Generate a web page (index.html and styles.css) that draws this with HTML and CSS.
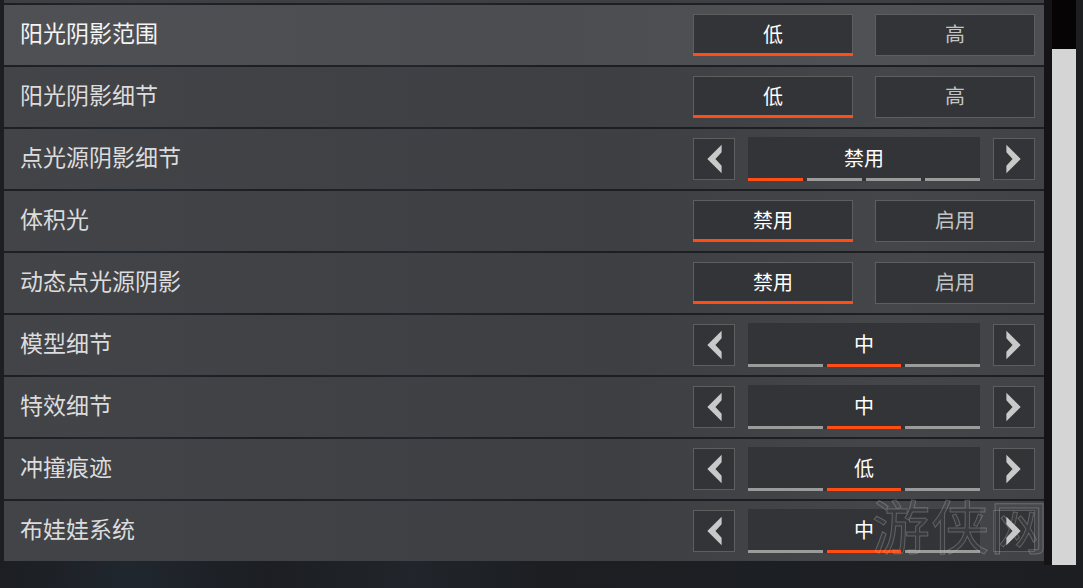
FILE: index.html
```html
<!DOCTYPE html>
<html lang="zh-CN">
<head>
<meta charset="utf-8">
<title>图形设置</title>
<link rel="stylesheet" href="styles.css">
</head>
<body>
<div class="screen">
  <div class="list">
    <div class="row-cut"></div>

    <div class="row active">
      <span class="label">阳光阴影范围</span>
      <div class="toggle">
        <div class="opt on">低</div>
        <div class="opt">高</div>
      </div>
    </div>

    <div class="row">
      <span class="label">阳光阴影细节</span>
      <div class="toggle">
        <div class="opt on">低</div>
        <div class="opt">高</div>
      </div>
    </div>

    <div class="row">
      <span class="label">点光源阴影细节</span>
      <div class="selector">
        <div class="arrow"><svg viewBox="0 0 42 42" width="40" height="40"><polygon points="29,6 29,14 22.5,21 29,28 29,36 14,21" /></svg></div>
        <div class="bar">
          <div class="value">禁用</div>
          <div class="segs"><i class="seg on"></i><i class="seg"></i><i class="seg"></i><i class="seg"></i></div>
        </div>
        <div class="arrow"><svg viewBox="0 0 42 42" width="40" height="40"><polygon points="13,6 13,14 19.5,21 13,28 13,36 28,21" /></svg></div>
      </div>
    </div>

    <div class="row">
      <span class="label">体积光</span>
      <div class="toggle">
        <div class="opt on">禁用</div>
        <div class="opt">启用</div>
      </div>
    </div>

    <div class="row">
      <span class="label">动态点光源阴影</span>
      <div class="toggle">
        <div class="opt on">禁用</div>
        <div class="opt">启用</div>
      </div>
    </div>

    <div class="row">
      <span class="label">模型细节</span>
      <div class="selector">
        <div class="arrow"><svg viewBox="0 0 42 42" width="40" height="40"><polygon points="29,6 29,14 22.5,21 29,28 29,36 14,21" /></svg></div>
        <div class="bar">
          <div class="value">中</div>
          <div class="segs"><i class="seg"></i><i class="seg on"></i><i class="seg"></i></div>
        </div>
        <div class="arrow"><svg viewBox="0 0 42 42" width="40" height="40"><polygon points="13,6 13,14 19.5,21 13,28 13,36 28,21" /></svg></div>
      </div>
    </div>

    <div class="row">
      <span class="label">特效细节</span>
      <div class="selector">
        <div class="arrow"><svg viewBox="0 0 42 42" width="40" height="40"><polygon points="29,6 29,14 22.5,21 29,28 29,36 14,21" /></svg></div>
        <div class="bar">
          <div class="value">中</div>
          <div class="segs"><i class="seg"></i><i class="seg on"></i><i class="seg"></i></div>
        </div>
        <div class="arrow"><svg viewBox="0 0 42 42" width="40" height="40"><polygon points="13,6 13,14 19.5,21 13,28 13,36 28,21" /></svg></div>
      </div>
    </div>

    <div class="row">
      <span class="label">冲撞痕迹</span>
      <div class="selector">
        <div class="arrow"><svg viewBox="0 0 42 42" width="40" height="40"><polygon points="29,6 29,14 22.5,21 29,28 29,36 14,21" /></svg></div>
        <div class="bar">
          <div class="value">低</div>
          <div class="segs"><i class="seg"></i><i class="seg on"></i><i class="seg"></i></div>
        </div>
        <div class="arrow"><svg viewBox="0 0 42 42" width="40" height="40"><polygon points="13,6 13,14 19.5,21 13,28 13,36 28,21" /></svg></div>
      </div>
    </div>

    <div class="row">
      <span class="label">布娃娃系统</span>
      <div class="selector">
        <div class="arrow"><svg viewBox="0 0 42 42" width="40" height="40"><polygon points="29,6 29,14 22.5,21 29,28 29,36 14,21" /></svg></div>
        <div class="bar">
          <div class="value">中</div>
          <div class="segs"><i class="seg"></i><i class="seg on"></i><i class="seg"></i></div>
        </div>
        <div class="arrow"><svg viewBox="0 0 42 42" width="40" height="40"><polygon points="13,6 13,14 19.5,21 13,28 13,36 28,21" /></svg></div>
      </div>
    </div>
  </div>

  <div class="scrollbar">
    <div class="gutter"></div>
    <div class="track"><div class="thumb"></div></div>
  </div>
</div>
<div class="watermark">游侠网</div>
</body>
</html>
```

FILE: styles.css
```css
html, body {
  margin: 0;
  padding: 0;
}

body {
  width: 1083px;
  height: 588px;
  overflow: hidden;
  position: relative;
  font-family: "Noto Sans CJK SC", "Noto Sans", sans-serif;
  background:
    linear-gradient(90deg, rgba(40,55,70,0) 0%, rgba(40,55,70,0.35) 12%, rgba(40,55,70,0) 25%, rgba(45,55,65,0.3) 38%, rgba(45,55,65,0) 50%, rgba(30,35,40,0.2) 70%, rgba(0,0,0,0) 100%),
    #1c1e22;
}

.screen {
  display: flex;
  height: 588px;
}

.list {
  margin-left: 4px;
  width: 1040px;
  display: flex;
  flex-direction: column;
  gap: 2px;
}

.row-cut {
  height: 3px;
  background: #3e3f43;
}

.row {
  height: 60px;
  display: flex;
  align-items: center;
  padding: 0 9px 0 16px;
  box-sizing: border-box;
  background: linear-gradient(90deg, #434448 0%, #3f4044 45%, #3e3f43 60%, #45464a 85%, #424347 100%);
}

.row.active {
  background: linear-gradient(90deg, #4f5054 0%, #4c4d51 50%, #505155 85%, #4d4e52 100%);
}

.label {
  font-size: 23px;
  color: #dcdcdc;
  line-height: 30px;
  padding-bottom: 6px;
}

.row.active .label {
  color: #f4f4f4;
}

.toggle {
  margin-left: auto;
  display: flex;
  gap: 22px;
}

.opt {
  position: relative;
  width: 160px;
  height: 42px;
  box-sizing: border-box;
  border: 1px solid #5b605e;
  background: #333437;
  color: #c4c4c4;
  font-size: 20px;
  display: flex;
  align-items: center;
  justify-content: center;
  padding-bottom: 3px;
}

.opt.on {
  color: #ffffff;
}

.opt.on::after {
  content: "";
  position: absolute;
  left: -1px;
  right: -1px;
  bottom: -1px;
  height: 3px;
  background: #ff4d15;
}

.selector {
  margin-left: auto;
  display: flex;
  align-items: center;
  gap: 13px;
}

.arrow {
  width: 42px;
  height: 42px;
  box-sizing: border-box;
  border: 1px solid #5b605e;
  background: #333437;
  display: flex;
  align-items: center;
  justify-content: center;
}

.arrow svg {
  display: block;
  fill: #c9c9c9;
}

.bar {
  width: 232px;
  height: 44px;
  background: #333437;
  display: flex;
  flex-direction: column;
}

.value {
  flex: 1;
  display: flex;
  align-items: center;
  justify-content: center;
  color: #ffffff;
  font-size: 20px;
  padding-bottom: 1px;
}

.segs {
  display: flex;
  gap: 4px;
  height: 3px;
}

.seg {
  flex: 1;
  background: #9b9b9b;
}

.seg.on {
  background: #ff4d15;
}

.scrollbar {
  width: 32px;
  display: flex;
}

.gutter {
  width: 8px;
  background: #151316;
  height: 565px;
}

.track {
  width: 24px;
  height: 565px;
  background: #070405;
  display: flex;
  flex-direction: column;
  justify-content: flex-end;
}

.thumb {
  height: 516px;
  background: #d5d5d5;
}

.watermark {
  position: absolute;
  left: 872px;
  top: 474px;
  font-family: "Noto Sans CJK SC", sans-serif;
  font-size: 58px;
  line-height: 100px;
  letter-spacing: 1px;
  color: rgba(255, 255, 255, 0.03);
  -webkit-text-stroke: 1px rgba(190, 190, 190, 0.32);
  pointer-events: none;
}
```
